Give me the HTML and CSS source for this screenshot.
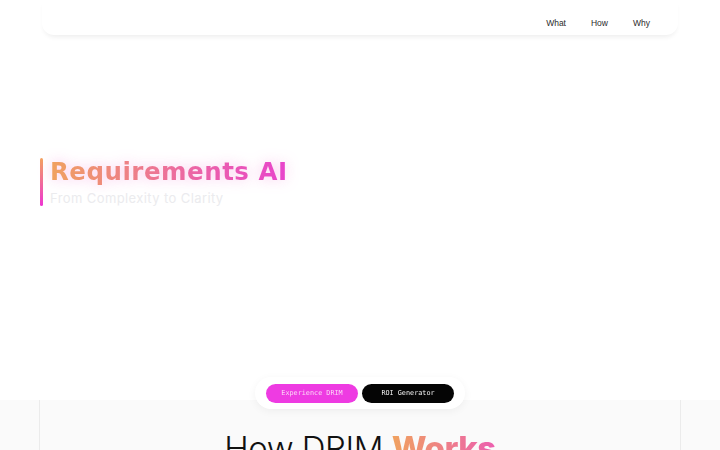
FILE: index.html
```html
<!DOCTYPE html>
<html lang="en">
<head>
<meta charset="utf-8">
<title>DRIM - Requirements AI</title>
<link rel="stylesheet" href="styles.css">
</head>
<body>
<header class="topbar">
  <nav class="nav">
    <a class="nav-link" href="#what">What</a>
    <a class="nav-link" href="#how">How</a>
    <a class="nav-link" href="#why">Why</a>
  </nav>
</header>

<section class="hero">
  <div class="hero-block">
    <span class="hero-bar"></span>
    <div class="hero-text">
      <h1 class="hero-title">Requirements AI</h1>
      <p class="hero-sub">From Complexity to Clarity</p>
    </div>
  </div>
</section>

<div class="cta-dock">
  <a class="cta cta-pink" href="#experience">Experience DRIM</a>
  <a class="cta cta-black" href="#roi">ROI Generator</a>
</div>

<section class="how" id="how">
  <div class="how-frame">
    <h2 class="how-title">How DRIM <span class="how-accent">Works</span></h2>
  </div>
</section>
</body>
</html>
```

FILE: styles.css
```css
* { box-sizing: border-box; }

html, body {
  margin: 0;
  padding: 0;
  background: #ffffff;
  font-family: "Inter", "Liberation Sans", sans-serif;
  overflow: hidden;
}

.topbar {
  padding: 0 42px;
}

.nav {
  height: 35px;
  background: #ffffff;
  border-radius: 0 0 12px 12px;
  box-shadow: 0 4px 5px -2px rgba(0, 0, 0, 0.07);
  display: flex;
  justify-content: flex-end;
  align-items: flex-end;
  gap: 25px;
  padding: 0 28px 6px 0;
}

.nav-link {
  font-family: "Liberation Sans", sans-serif;
  font-size: 8.5px;
  line-height: 11px;
  color: #2a2a2a;
  text-decoration: none;
}

.hero {
  height: 365px;
  padding: 123px 0 0 40px;
}

.hero-block {
  display: flex;
  gap: 7px;
}

.hero-bar {
  width: 3px;
  height: 48px;
  border-radius: 2px;
  background: linear-gradient(180deg, #f3a35e 0%, #ee36d2 100%);
}

.hero-text {
  display: flex;
  flex-direction: column;
}

.hero-title {
  margin: 0;
  font-family: "DejaVu Sans", sans-serif;
  font-weight: 700;
  font-size: 24.5px;
  line-height: 27px;
  letter-spacing: 0.5px;
  background: linear-gradient(90deg, #f0a25f 0%, #ec6aa0 55%, #e843cc 100%);
  -webkit-background-clip: text;
  background-clip: text;
  -webkit-text-fill-color: transparent;
  color: transparent;
  filter: drop-shadow(0 0 7px rgba(240, 90, 200, 0.35));
  align-self: flex-start;
}

.hero-sub {
  margin: 6px 0 0 0;
  font-family: "Inter", sans-serif;
  font-size: 13px;
  line-height: 15px;
  letter-spacing: 0.4px;
  color: #ebebee;
}

.cta-dock {
  position: fixed;
  top: 377px;
  left: 255px;
  width: 210px;
  height: 32px;
  background: #ffffff;
  border-radius: 16px;
  box-shadow: 0 2px 8px rgba(0, 0, 0, 0.05);
  display: flex;
  align-items: center;
  justify-content: center;
  gap: 4px;
  z-index: 10;
}

.cta {
  width: 92px;
  height: 19px;
  border-radius: 10px;
  display: flex;
  align-items: center;
  justify-content: center;
  font-family: "DejaVu Sans Mono", monospace;
  font-size: 6.8px;
  text-decoration: none;
}

.cta-pink {
  background: #ee3be2;
  color: #fbd6f6;
}

.cta-black {
  background: #050505;
  color: #f2f2f2;
}

.how {
  background: #fafafa;
  height: 50px;
  overflow: hidden;
}

.how-frame {
  margin: 0 39px;
  height: 100%;
  border-left: 1px solid #ebebeb;
  border-right: 1px solid #ebebeb;
  padding-top: 28px;
  text-align: center;
}

.how-title {
  margin: 0;
  font-family: "Inter", sans-serif;
  font-weight: 300;
  font-size: 33px;
  line-height: 40px;
  color: #111111;
  letter-spacing: -0.5px;
}

.how-accent {
  font-weight: 800;
  background: linear-gradient(90deg, #f0a25f 0%, #ec5fb0 100%);
  -webkit-background-clip: text;
  background-clip: text;
  -webkit-text-fill-color: transparent;
  color: transparent;
}
```
